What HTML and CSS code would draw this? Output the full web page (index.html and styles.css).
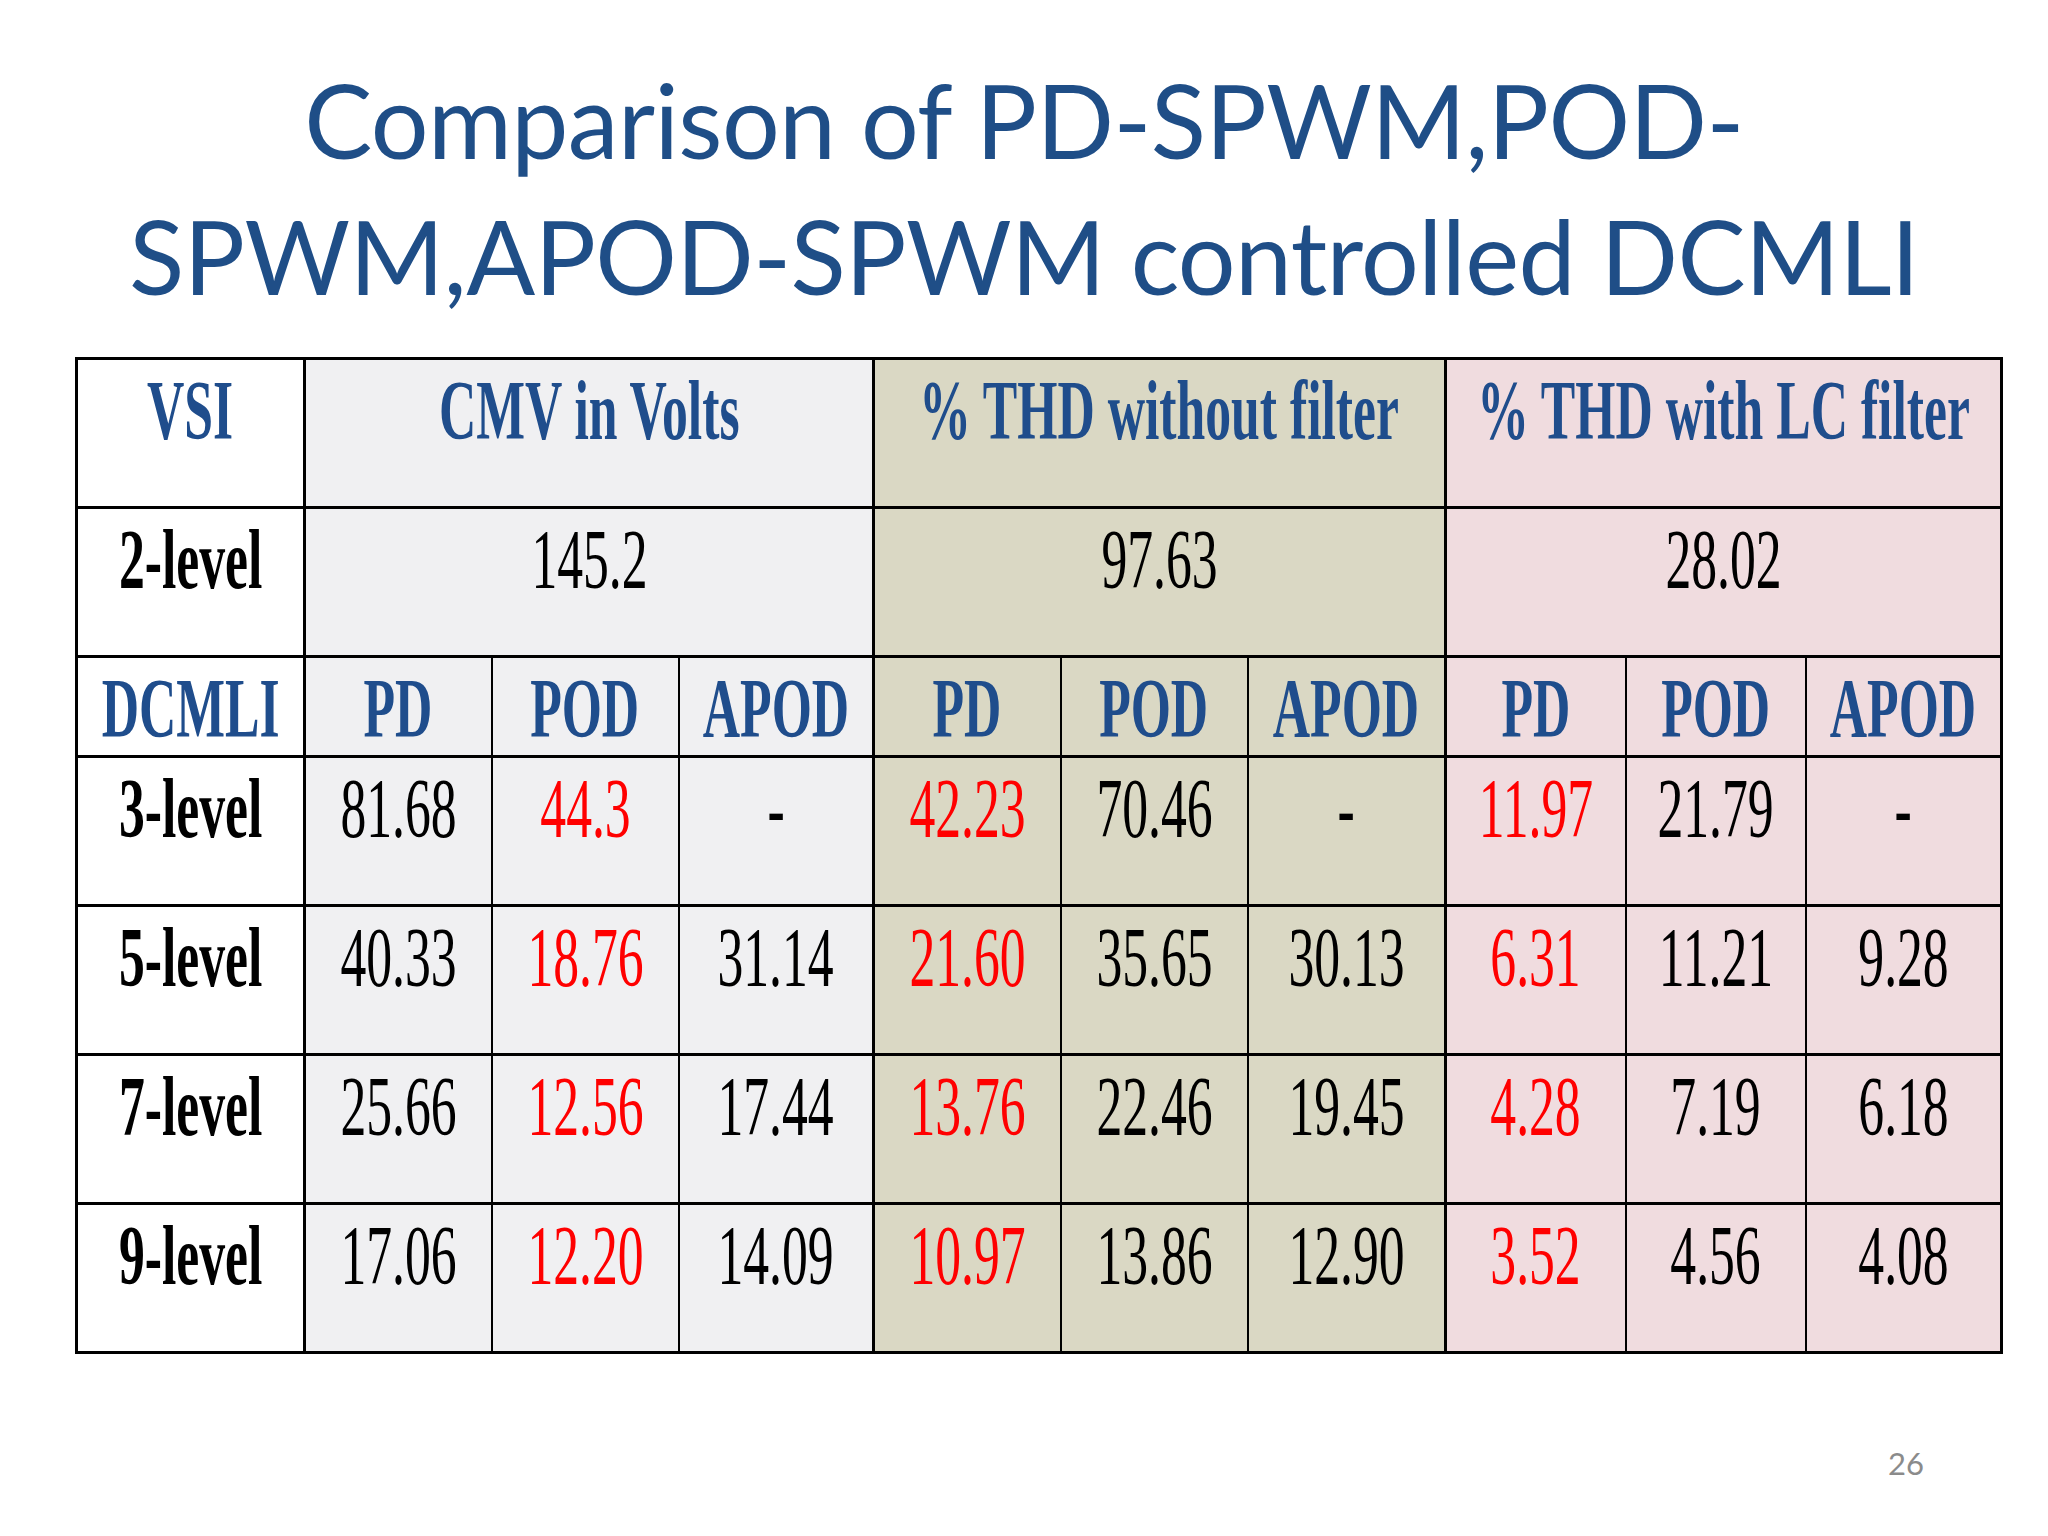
FILE: index.html
```html
<!DOCTYPE html>
<html lang="en">
<head>
<meta charset="utf-8">
<title>Comparison of PD-SPWM, POD-SPWM, APOD-SPWM controlled DCMLI</title>
<link rel="stylesheet" href="styles.css">
</head>
<body>
<div class="slide">
  <h1 class="title"><span class="line">Comparison of PD-SPWM,POD-</span><span class="line">SPWM,APOD-SPWM controlled DCMLI</span></h1>
  <table class="cmp">
    <colgroup>
      <col class="w-lab"><col class="w-a"><col class="w-a"><col class="w-b"><col class="w-a"><col class="w-a"><col class="w-c"><col class="w-d"><col class="w-d"><col class="w-e">
    </colgroup>
    <tr class="tall">
      <td class="g0 hd"><div class="c"><span class="t">VSI</span></div></td>
      <td class="g1 hd" colspan="3"><div class="c"><span class="t">CMV in Volts</span></div></td>
      <td class="g2 hd" colspan="3"><div class="c"><span class="t">% THD without filter</span></div></td>
      <td class="g3 hd" colspan="3"><div class="c"><span class="t">% THD with LC filter</span></div></td>
    </tr>
    <tr class="tall">
      <td class="g0 lab"><div class="c"><span class="t">2-level</span></div></td>
      <td class="g1" colspan="3"><div class="c"><span class="t">145.2</span></div></td>
      <td class="g2" colspan="3"><div class="c"><span class="t">97.63</span></div></td>
      <td class="g3" colspan="3"><div class="c"><span class="t">28.02</span></div></td>
    </tr>
    <tr class="short">
      <td class="g0 hd"><div class="c"><span class="t">DCMLI</span></div></td>
      <td class="g1 hd"><div class="c"><span class="t">PD</span></div></td>
      <td class="g1 hd"><div class="c"><span class="t">POD</span></div></td>
      <td class="g1 hd"><div class="c"><span class="t">APOD</span></div></td>
      <td class="g2 hd"><div class="c"><span class="t">PD</span></div></td>
      <td class="g2 hd"><div class="c"><span class="t">POD</span></div></td>
      <td class="g2 hd"><div class="c"><span class="t">APOD</span></div></td>
      <td class="g3 hd"><div class="c"><span class="t">PD</span></div></td>
      <td class="g3 hd"><div class="c"><span class="t">POD</span></div></td>
      <td class="g3 hd"><div class="c"><span class="t">APOD</span></div></td>
    </tr>
    <tr class="tall">
      <td class="g0 lab"><div class="c"><span class="t">3-level</span></div></td>
      <td class="g1"><div class="c"><span class="t">81.68</span></div></td>
      <td class="g1 red"><div class="c"><span class="t">44.3</span></div></td>
      <td class="g1"><div class="c"><span class="t">-</span></div></td>
      <td class="g2 red"><div class="c"><span class="t">42.23</span></div></td>
      <td class="g2"><div class="c"><span class="t">70.46</span></div></td>
      <td class="g2"><div class="c"><span class="t">-</span></div></td>
      <td class="g3 red"><div class="c"><span class="t">11.97</span></div></td>
      <td class="g3"><div class="c"><span class="t">21.79</span></div></td>
      <td class="g3"><div class="c"><span class="t">-</span></div></td>
    </tr>
    <tr class="tall">
      <td class="g0 lab"><div class="c"><span class="t">5-level</span></div></td>
      <td class="g1"><div class="c"><span class="t">40.33</span></div></td>
      <td class="g1 red"><div class="c"><span class="t">18.76</span></div></td>
      <td class="g1"><div class="c"><span class="t">31.14</span></div></td>
      <td class="g2 red"><div class="c"><span class="t">21.60</span></div></td>
      <td class="g2"><div class="c"><span class="t">35.65</span></div></td>
      <td class="g2"><div class="c"><span class="t">30.13</span></div></td>
      <td class="g3 red"><div class="c"><span class="t">6.31</span></div></td>
      <td class="g3"><div class="c"><span class="t">11.21</span></div></td>
      <td class="g3"><div class="c"><span class="t">9.28</span></div></td>
    </tr>
    <tr class="tall">
      <td class="g0 lab"><div class="c"><span class="t">7-level</span></div></td>
      <td class="g1"><div class="c"><span class="t">25.66</span></div></td>
      <td class="g1 red"><div class="c"><span class="t">12.56</span></div></td>
      <td class="g1"><div class="c"><span class="t">17.44</span></div></td>
      <td class="g2 red"><div class="c"><span class="t">13.76</span></div></td>
      <td class="g2"><div class="c"><span class="t">22.46</span></div></td>
      <td class="g2"><div class="c"><span class="t">19.45</span></div></td>
      <td class="g3 red"><div class="c"><span class="t">4.28</span></div></td>
      <td class="g3"><div class="c"><span class="t">7.19</span></div></td>
      <td class="g3"><div class="c"><span class="t">6.18</span></div></td>
    </tr>
    <tr class="tall">
      <td class="g0 lab"><div class="c"><span class="t">9-level</span></div></td>
      <td class="g1"><div class="c"><span class="t">17.06</span></div></td>
      <td class="g1 red"><div class="c"><span class="t">12.20</span></div></td>
      <td class="g1"><div class="c"><span class="t">14.09</span></div></td>
      <td class="g2 red"><div class="c"><span class="t">10.97</span></div></td>
      <td class="g2"><div class="c"><span class="t">13.86</span></div></td>
      <td class="g2"><div class="c"><span class="t">12.90</span></div></td>
      <td class="g3 red"><div class="c"><span class="t">3.52</span></div></td>
      <td class="g3"><div class="c"><span class="t">4.56</span></div></td>
      <td class="g3"><div class="c"><span class="t">4.08</span></div></td>
    </tr>
  </table>
  <div class="footer"><span class="pagenum">26</span></div>
</div>
</body>
</html>
```

FILE: styles.css
```css
html, body {
  margin: 0;
  padding: 0;
  background: #ffffff;
}

.slide {
  width: 2048px;
  height: 1536px;
  background: #ffffff;
  overflow: hidden;
  display: flex;
  flex-direction: column;
}

.title {
  margin: 52px 0 0 0;
  font-family: Lato, "Open Sans", sans-serif;
  font-weight: normal;
  font-size: 102px;
  line-height: 136px;
  letter-spacing: -0.6px;
  color: #1f4e87;
  text-align: center;
  display: flex;
  flex-direction: column;
  align-items: center;
}

.title .line {
  display: block;
  white-space: nowrap;
}

.cmp {
  margin: 33px 0 0 75px;
  width: 1925px;
  table-layout: fixed;
  border-collapse: collapse;
  border: 3px solid #000;
  font-family: "Liberation Serif", "Times New Roman", serif;
  font-size: 84px;
  line-height: 84px;
  color: #000;
}

.w-lab { width: 228px; }
.w-a { width: 187px; }
.w-b { width: 195px; }
.w-c { width: 198px; }
.w-d { width: 180px; }
.w-e { width: 196px; }

.cmp tr.tall { height: 149px; }
.cmp tr.short { height: 100px; }

.cmp td {
  border-top: 3px solid #000;
  border-bottom: 3px solid #000;
  border-left: 2px solid #000;
  border-right: 2px solid #000;
  padding: 9px 0 0 0;
  vertical-align: top;
  white-space: nowrap;
  overflow: visible;
}

.cmp td.g0 { border-right: 3px solid #000; }
.cmp td.g1:nth-child(4), .cmp td.g2:nth-child(7) { border-right: 3px solid #000; }
.cmp tr:first-child td, .cmp tr:nth-child(2) td { border-right: 3px solid #000; }

.g0 { background: #ffffff; }
.g1 { background: #f0f0f2; }
.g2 { background: #dad8c4; }
.g3 { background: #f0dcdf; }

.c {
  display: flex;
  justify-content: center;
}

.t {
  display: inline-block;
  transform: scaleX(0.615);
  transform-origin: 50% 50%;
}

.hd {
  color: #1f4d8c;
  font-weight: bold;
}

.lab {
  font-weight: bold;
}

.red {
  color: #ff0000;
}

.footer {
  flex: 1;
  display: flex;
  justify-content: flex-end;
  align-items: flex-start;
  padding: 94px 124px 0 0;
}

.pagenum {
  font-family: Lato, "Open Sans", sans-serif;
  font-size: 31px;
  line-height: 31px;
  color: #8b8b8b;
}
```
